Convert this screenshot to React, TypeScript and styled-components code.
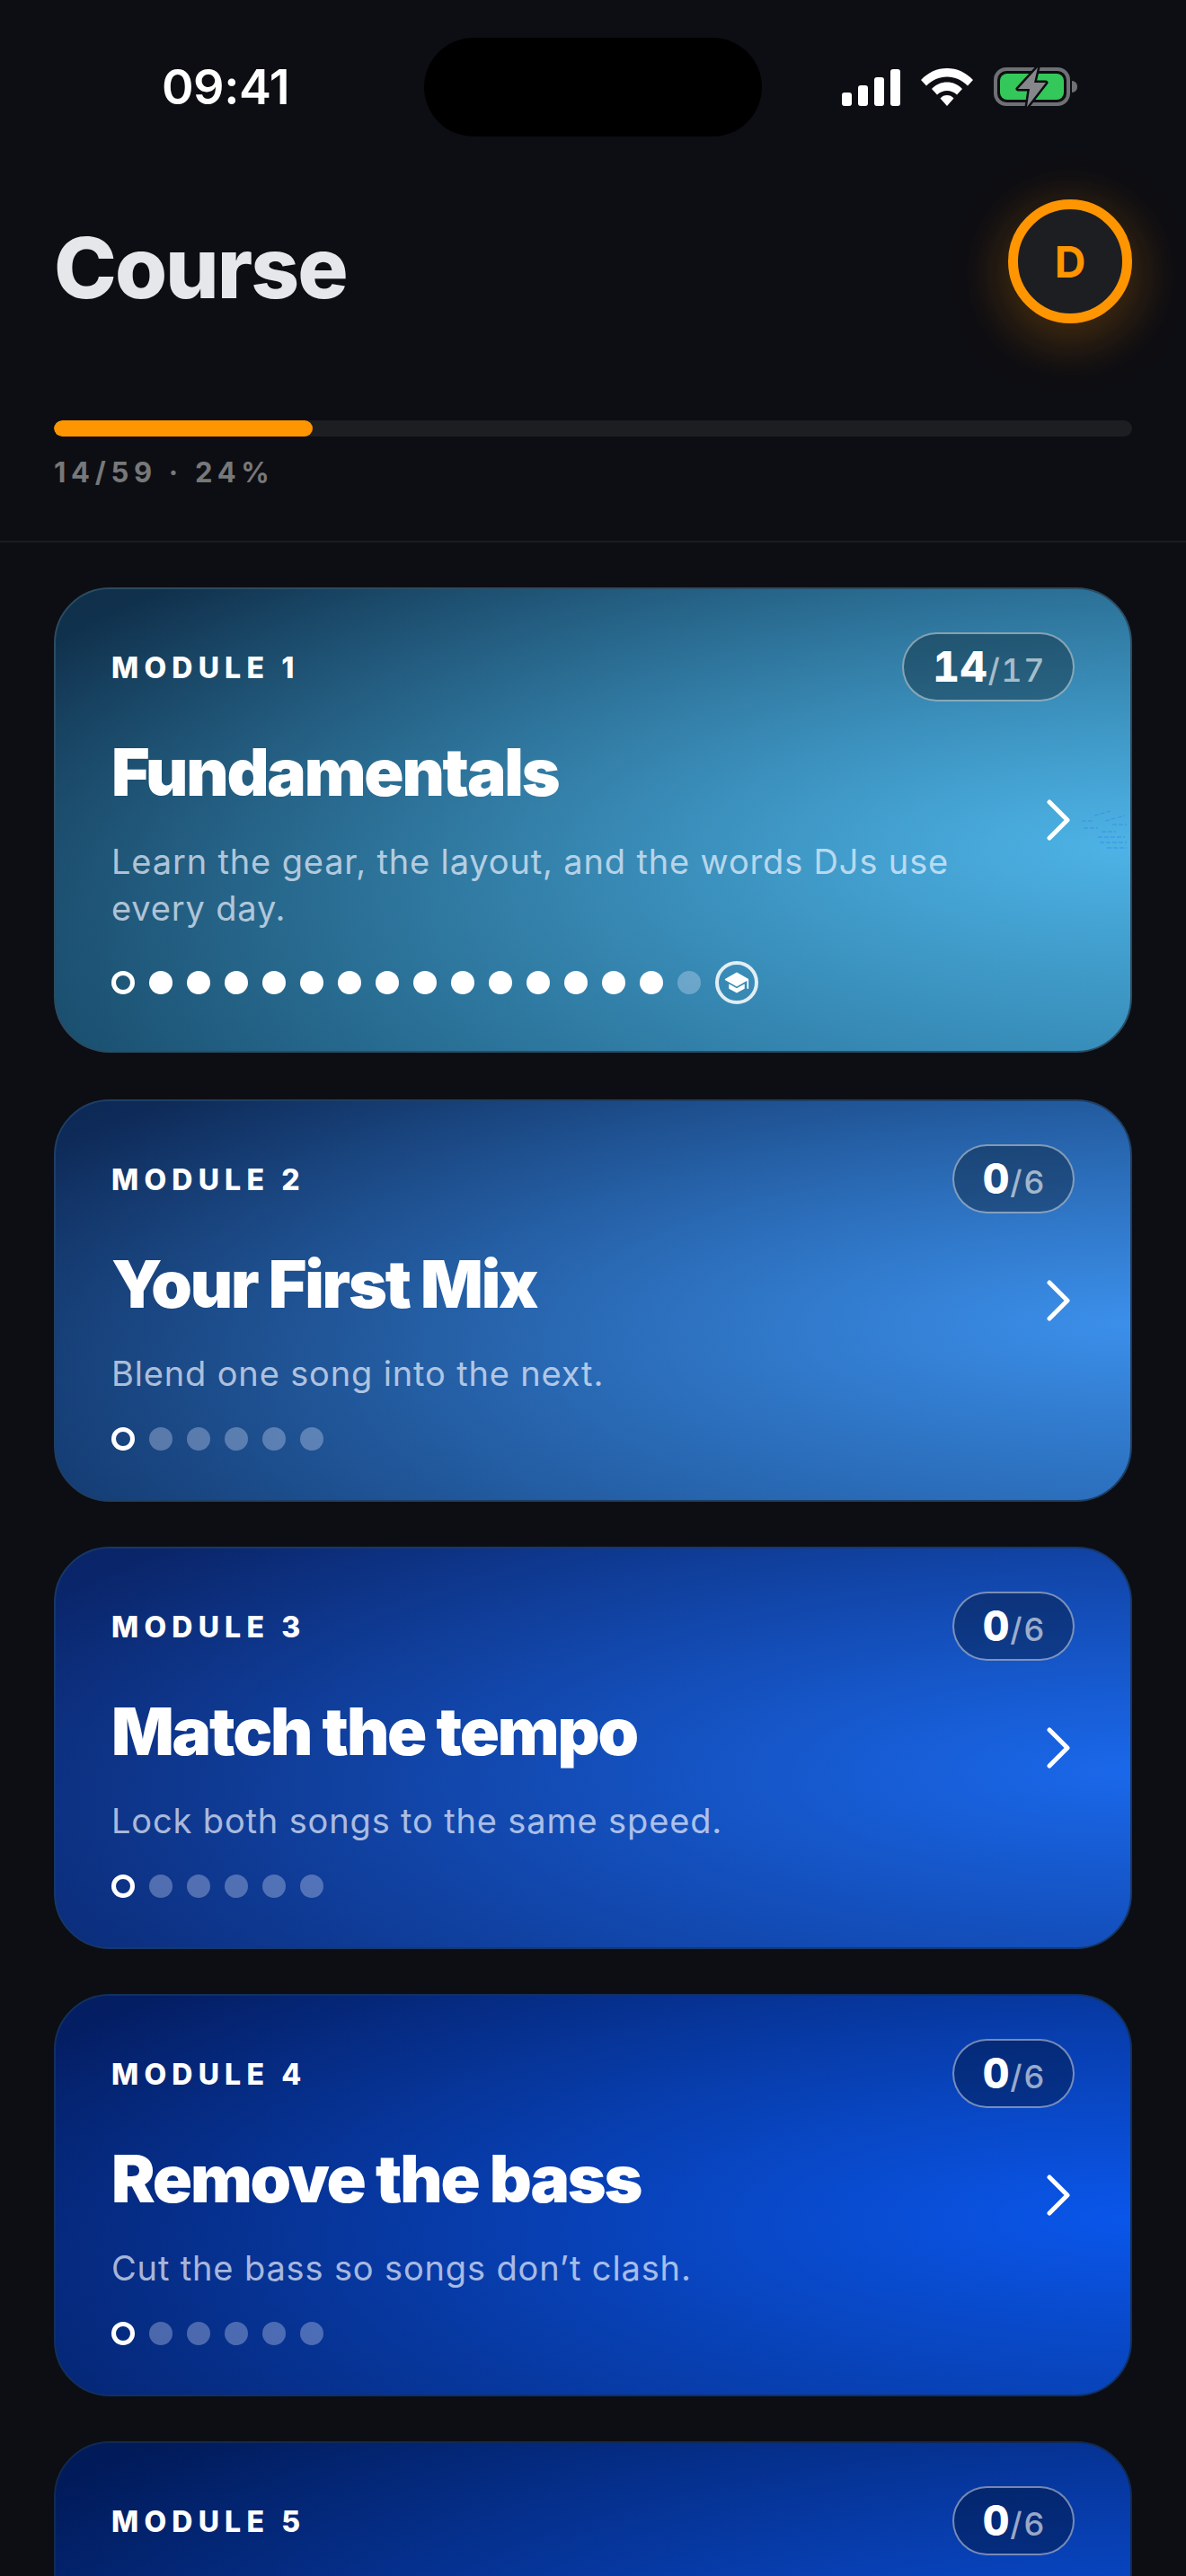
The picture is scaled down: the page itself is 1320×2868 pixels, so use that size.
import React from 'react';
import styled, { createGlobalStyle } from 'styled-components';
import { IoSchool } from 'react-icons/io5';

const GlobalStyle = createGlobalStyle`
  html, body {
    margin: 0;
    padding: 0;
    background: #0d0e13;
  }
  * {
    box-sizing: border-box;
  }
`;

const Screen = styled.div`
  width: 1320px;
  height: 2868px;
  overflow: hidden;
  background: #0d0e13;
  font-family: Inter, 'Liberation Sans', sans-serif;
  color: #fff;
`;

const StatusBar = styled.div`
  display: flex;
  align-items: center;
  justify-content: space-between;
  height: 110px;
  margin-top: 42px;
  padding: 0 120px 0 180px;
  position: relative;
`;

const Time = styled.div`
  font-size: 54px;
  font-weight: 600;
  letter-spacing: -0.5px;
  line-height: 1;
`;

const Island = styled.div`
  position: absolute;
  left: 472px;
  top: 0;
  width: 376px;
  height: 110px;
  border-radius: 55px;
  background: #000;
`;

const StatusIcons = styled.div`
  display: flex;
  align-items: center;
  gap: 23px;
`;

const Header = styled.div`
  display: flex;
  align-items: center;
  justify-content: space-between;
  padding: 70px 60px 0;
`;

const Title = styled.h1`
  margin: 0;
  padding-top: 14px;
  font-size: 94px;
  font-weight: 800;
  letter-spacing: -2px;
  line-height: 124px;
  color: #e5e7eb;
`;

const Avatar = styled.div`
  width: 138px;
  height: 138px;
  border-radius: 50%;
  border: 11px solid #ff9500;
  background: #1c1e22;
  color: #ff9500;
  display: flex;
  align-items: center;
  justify-content: center;
  font-size: 48px;
  font-weight: 700;
  box-shadow: 0 14px 64px rgba(255, 149, 0, 0.27), 0 12px 40px 30px rgba(255, 149, 0, 0.035);
`;

const ProgressArea = styled.div`
  padding: 108px 60px 0;
  height: 244px;
  border-bottom: 2px solid #1a1b20;
`;

const ProgressTrack = styled.div`
  height: 18px;
  border-radius: 9px;
  background: #1c1e22;
  overflow: hidden;
`;

const ProgressFill = styled.div`
  height: 100%;
  border-radius: 9px;
  background: #ff9500;
`;

const ProgressLabel = styled.div`
  margin-top: 20px;
  font-size: 31px;
  font-weight: 700;
  letter-spacing: 5.7px;
  line-height: 40px;
  color: #77787a;
`;

const CardList = styled.div`
  display: flex;
  flex-direction: column;
  gap: 50px;
  padding: 50px 60px 0;
`;

const Card = styled.div<{ $tl: string; $mid: string; $bright: string; $edge: string }>`
  position: relative;
  flex-shrink: 0;
  min-height: 448px;
  border-radius: 62px;
  border: 2px solid ${p => p.$edge};
  padding: 48px 62px 53px;
  background:
    radial-gradient(115% 90% at 100% 56%, ${p => p.$bright} 0%, ${p => p.$bright}00 100%),
    linear-gradient(160deg, ${p => p.$tl} 0%, ${p => p.$mid} 100%);

  &:first-child {
    margin-bottom: 2px;
  }
`;

const TopRow = styled.div`
  display: flex;
  align-items: center;
  justify-content: space-between;
`;

const ModuleLabel = styled.div`
  margin-top: 2px;
  font-size: 32px;
  font-weight: 800;
  letter-spacing: 6.2px;
`;

const Pill = styled.div`
  height: 77px;
  padding: 0 30px 0 32px;
  border-radius: 39px;
  border: 2px solid rgba(255, 255, 255, 0.45);
  background: rgba(0, 0, 0, 0.3);
  display: flex;
  align-items: baseline;
  line-height: 72px;
  font-variant-numeric: tabular-nums;
`;

const PillDone = styled.span`
  font-size: 46px;
  font-weight: 800;
  letter-spacing: 1px;
`;

const PillTotal = styled.span`
  font-size: 36px;
  font-weight: 500;
  letter-spacing: 1.5px;
  color: rgba(255, 255, 255, 0.6);
`;

const CardTitle = styled.div`
  margin-top: 39px;
  font-size: 73px;
  font-weight: 900;
  letter-spacing: -2.2px;
  line-height: 80px;
`;

const Description = styled.div`
  margin-top: 33px;
  max-width: 960px;
  font-size: 38px;
  font-weight: 400;
  letter-spacing: 0.85px;
  line-height: 52px;
  color: rgba(240, 244, 255, 0.7);
`;

const Dots = styled.div`
  display: flex;
  align-items: center;
  gap: 16px;
  margin-top: 34px;
`;

const Dot = styled.span<{ $kind: 'current' | 'done' | 'todo' }>`
  width: 26px;
  height: 26px;
  border-radius: 50%;
  flex-shrink: 0;
  border: ${p => (p.$kind === 'current' ? '5px solid #fff' : 'none')};
  background: ${p =>
    p.$kind === 'done' ? '#fff' : p.$kind === 'todo' ? 'rgba(225, 230, 255, 0.32)' : 'transparent'};
`;

const CapBadge = styled.span`
  width: 48px;
  height: 48px;
  margin: -1px 0;
  border-radius: 50%;
  border: 4px solid rgba(255, 255, 255, 0.85);
  display: flex;
  align-items: center;
  justify-content: center;
  color: #fff;
  font-size: 28px;
`;

const Chevron = styled.svg`
  position: absolute;
  right: 66px;
  top: 50%;
  transform: translateY(-50%);
  width: 28px;
  height: 46px;
`;

const Speckle = styled.svg`
  position: absolute;
  right: 2px;
  top: 244px;
  width: 54px;
  height: 52px;
`;

const SignalIcon = () => (
  <svg width="65" height="41" viewBox="0 0 65 41" fill="#fff">
    <rect x="0" y="26" width="11" height="15" rx="3" />
    <rect x="18" y="18" width="11" height="23" rx="3" />
    <rect x="36" y="9" width="11" height="32" rx="3" />
    <rect x="54" y="0" width="11" height="41" rx="3" />
  </svg>
);

const WifiIcon = () => (
  <svg width="58" height="42" viewBox="0 0 58 42" fill="#fff">
    <path d="M29 0C40 0 50 4.500 58 13L52 19.500C45.500 13 37.500 9.500 29 9.500C20.500 9.500 12.500 13 6 19.500L0 13C8 4.500 18 0 29 0Z" />
    <path d="M29 15.500C35.500 15.500 41.500 18 46 23L40 29.500C37 26.500 33 25 29 25C25 25 21 26.500 18 29.500L12 23C16.500 18 22.500 15.500 29 15.500Z" />
    <path d="M29 30C32 30 34.500 31 36.500 33.500L29 42L21.500 33.500C23.500 31 26 30 29 30Z" />
  </svg>
);

const BatteryIcon = () => (
  <svg width="94" height="46" viewBox="0 0 94 46">
    <rect x="2" y="3" width="81" height="39" rx="12" fill="none" stroke="#6e7074" strokeWidth="4" />
    <rect x="7" y="8" width="71" height="29" rx="8" fill="#34c759" />
    <path d="M87 16C91 16.500 93 19 93 22.500C93 26 91 28.500 87 29Z" fill="#6e7074" />
    <path
      d="M49 1L27 25H40L37 45L58 18H45Z"
      fill="#85878b"
      stroke="#0d0e13"
      strokeWidth="5"
      paintOrder="stroke"
      strokeLinejoin="round"
    />
  </svg>
);

type Module = {
  label: string;
  title: string;
  description: string;
  done: number;
  total: number;
  filled: number;
  cap?: boolean;
  colors: { tl: string; mid: string; bright: string; edge: string };
};

const modules: Module[] = [
  {
    label: 'MODULE 1',
    title: 'Fundamentals',
    description: 'Learn the gear, the layout, and the words DJs use every day.',
    done: 14,
    total: 17,
    filled: 14,
    cap: true,
    colors: { tl: '#0f2e49', mid: '#22688c', bright: '#4db3e6', edge: '#2a4c63' },
  },
  {
    label: 'MODULE 2',
    title: 'Your First Mix',
    description: 'Blend one song into the next.',
    done: 0,
    total: 6,
    filled: 0,
    colors: { tl: '#0d2855', mid: '#1b4e8e', bright: '#3b8fea', edge: '#1d3f66' },
  },
  {
    label: 'MODULE 3',
    title: 'Match the tempo',
    description: 'Lock both songs to the same speed.',
    done: 0,
    total: 6,
    filled: 0,
    colors: { tl: '#0a2468', mid: '#0c348a', bright: '#1a68ea', edge: '#15386a' },
  },
  {
    label: 'MODULE 4',
    title: 'Remove the bass',
    description: "Cut the bass so songs don\u2019t clash.",
    done: 0,
    total: 6,
    filled: 0,
    colors: { tl: '#041d62', mid: '#062f86', bright: '#0a56ea', edge: '#11315f' },
  },
  {
    label: 'MODULE 5',
    title: '',
    description: '',
    done: 0,
    total: 6,
    filled: 0,
    colors: { tl: '#011a58', mid: '#042a7c', bright: '#0a4ed8', edge: '#102a55' },
  },
];

const App: React.FC = () => {
  return (
    <Screen>
      <GlobalStyle />
      <StatusBar>
        <Time>09:41</Time>
        <Island />
        <StatusIcons>
          <SignalIcon />
          <WifiIcon />
          <BatteryIcon />
        </StatusIcons>
      </StatusBar>

      <Header>
        <Title>Course</Title>
        <Avatar>D</Avatar>
      </Header>

      <ProgressArea>
        <ProgressTrack>
          <ProgressFill style={{ width: '24%' }} />
        </ProgressTrack>
        <ProgressLabel>14/59 · 24%</ProgressLabel>
      </ProgressArea>

      <CardList>
        {modules.map(m => (
          <Card key={m.label} $tl={m.colors.tl} $mid={m.colors.mid} $bright={m.colors.bright} $edge={m.colors.edge}>
            <TopRow>
              <ModuleLabel>{m.label}</ModuleLabel>
              <Pill>
                <PillDone>{m.done}</PillDone>
                <PillTotal>/{m.total}</PillTotal>
              </Pill>
            </TopRow>
            <CardTitle>{m.title}</CardTitle>
            <Description>{m.description}</Description>
            <Dots>
              {Array.from({ length: m.total - (m.cap ? 1 : 0) }, (_, i) => (
                <Dot key={i} $kind={i === 0 ? 'current' : i <= m.filled ? 'done' : 'todo'} />
              ))}
              {m.cap && (
                <CapBadge>
                  <IoSchool />
                </CapBadge>
              )}
            </Dots>
            <Chevron viewBox="0 0 28 46" fill="none" stroke="#fff" strokeWidth="5" strokeLinecap="round" strokeLinejoin="round">
              <path d="M4 3L24 23L4 43" />
            </Chevron>
            {m.cap && (
              <Speckle viewBox="0 0 54 52" fill="none" stroke="#3f8fe6" strokeWidth="1" strokeDasharray="5 2">
                <path d="M2 14H14M4 22H20M16 8L34 3M24 26H40M20 32H50M22 38H52M30 44H52M28 14L50 8M36 18H52" />
              </Speckle>
            )}
          </Card>
        ))}
      </CardList>
    </Screen>
  );
};

export default App;
